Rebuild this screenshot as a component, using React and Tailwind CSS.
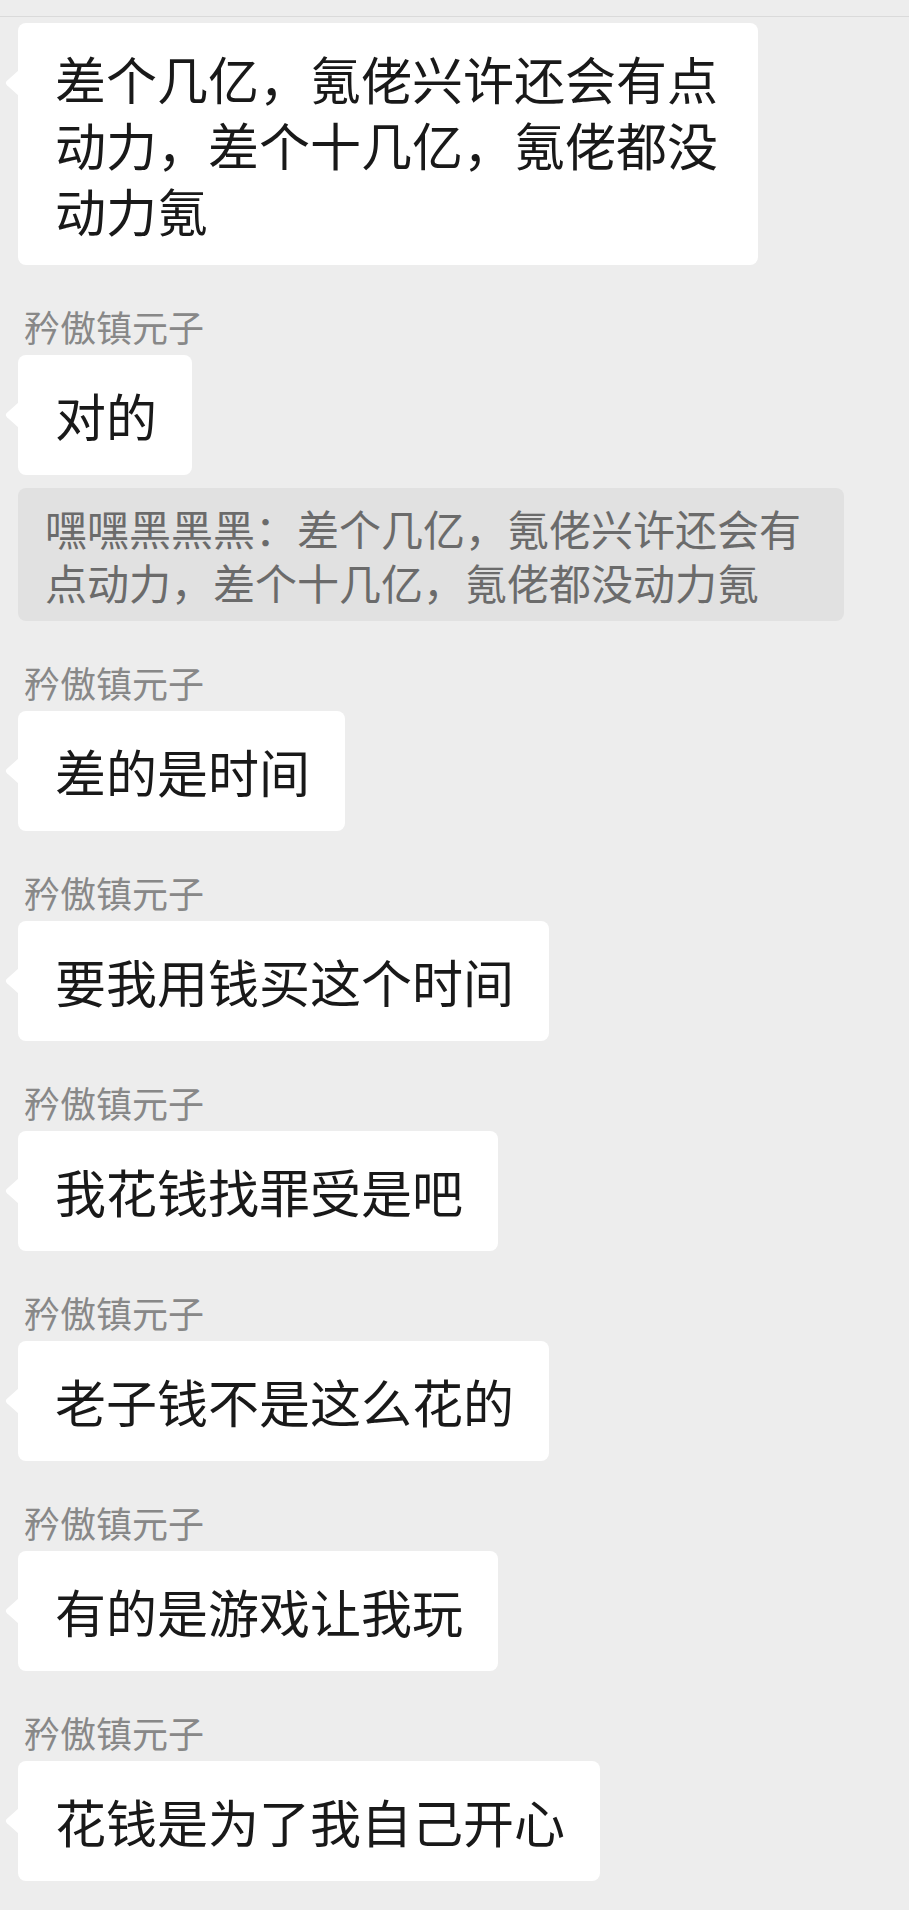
import React from "react";

const FONT = { fontFamily: '"Noto Sans CJK SC", "Noto Sans", sans-serif' };

function Tail() {
  return (
    <svg
      className="absolute left-[-15px] top-[47px]"
      width="16"
      height="26"
      viewBox="0 0 16 26"
    >
      <path d="M16 0 L16 26 L4 15.2 Q1.6 13 4 10.8 Z" fill="#ffffff" />
    </svg>
  );
}

function Bubble({ children, className = "" }) {
  return (
    <div
      className={
        "relative w-fit max-w-[740px] min-h-[120px] flex items-center rounded-[8px] bg-white pl-[37px] pr-[35px] py-[22px] text-[51px] leading-[66px] text-[#191919] " +
        className
      }
    >
      <Tail />
      <div>{children}</div>
    </div>
  );
}

function Name() {
  return (
    <div className="mt-[41px] mb-[9px] h-[40px] pl-[6px] text-[36px] leading-[40px] text-[#888888]">
      矜傲镇元子
    </div>
  );
}

export default function App() {
  const msgs = [
    "差的是时间",
    "要我用钱买这个时间",
    "我花钱找罪受是吧",
    "老子钱不是这么花的",
    "有的是游戏让我玩",
    "花钱是为了我自己开心",
  ];
  return (
    <div className="min-h-[1910px] w-full bg-[#ededed]" style={FONT}>
      <div className="h-[16px]" />
      <div className="h-px bg-[#dadada]" />
      <div className="flex flex-col items-start pl-[18px] pt-[6px] pb-[27px]">
        <Bubble>差个几亿，氪佬兴许还会有点动力，差个十几亿，氪佬都没动力氪</Bubble>
        <Name />
        <Bubble>对的</Bubble>
        <div className="mt-[13px] w-[826px] rounded-[8px] bg-[#e1e1e1] px-[27px] py-[13px] text-[42px] leading-[53.5px] text-[#6b6b6b]">
          嘿嘿黑黑黑：差个几亿，氪佬兴许还会有点动力，差个十几亿，氪佬都没动力氪
        </div>
        {msgs.map((m) => (
          <React.Fragment key={m}>
            <Name />
            <Bubble>{m}</Bubble>
          </React.Fragment>
        ))}
      </div>
    </div>
  );
}
